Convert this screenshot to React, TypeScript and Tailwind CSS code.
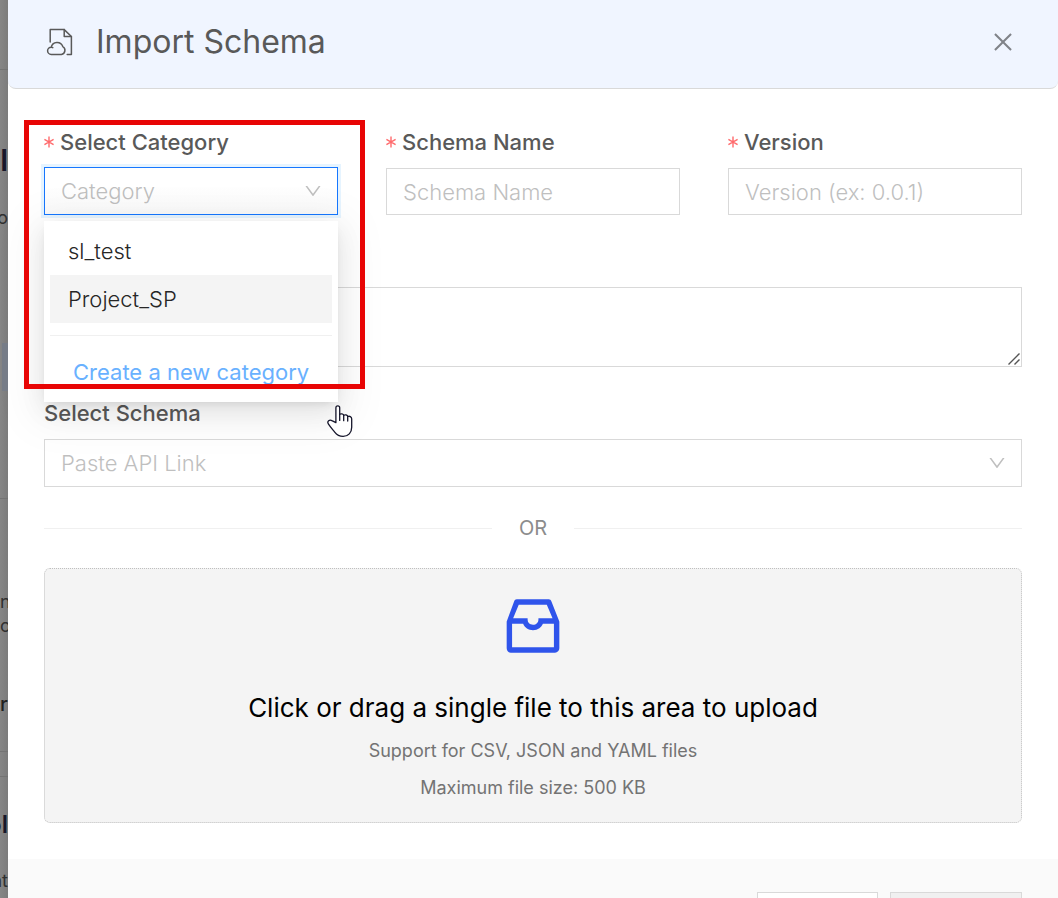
import React from "react";
import { AiOutlineClose, AiOutlineDown, AiOutlineInbox } from "react-icons/ai";

const fieldBox = "block w-full rounded-none border border-[#d9d9d9] bg-white px-4 text-[22px] font-light text-[#262626] placeholder:text-[#bfbfbf] outline-none";

function FieldLabel({ htmlFor, required, children }: { htmlFor: string; required?: boolean; children: React.ReactNode }) {
  return (
    <label htmlFor={htmlFor} className="flex h-9 items-center gap-1.5 text-[22px] font-medium whitespace-nowrap text-[#595959]">
      {required && <RequiredMark />}
      {children}
    </label>
  );
}

function RequiredMark() {
  return (
    <svg viewBox="0 0 10 12" className="h-3 w-2.5 text-[#ff6b6d]" fill="none" stroke="currentColor" strokeWidth="1.4" aria-hidden="true">
      <path d="M5 .5v11M.4 3.4l9.2 5.2M9.6 3.4.4 8.6" />
    </svg>
  );
}

function FileCloudIcon() {
  return (
    <svg viewBox="0 0 28 30" className="h-[30px] w-7" fill="none" stroke="#595959" strokeWidth="1.5" strokeLinecap="round" strokeLinejoin="round" aria-hidden="true">
      <path d="M4.2 15V2.6h14l7.2 6.9v17.9h-4.2" />
      <path d="M18.2 2.6v6.9h7.2" />
      <path d="M5.2 27.4a3.6 3.6 0 0 1 0-7.2c.6 0 1.1.1 1.6.4M5.2 20.2a6 6 0 0 1 11.6-.6 4.2 4.2 0 0 1-1.4 7.8H5.2" />
    </svg>
  );
}

function PointerHand() {
  return (
    <svg viewBox="0 0 26 34" className="pointer-events-none absolute top-[405px] left-[319px] z-30 h-[34px] w-[26px]" fill="#fff" stroke="#15152a" strokeWidth="1.3" strokeLinejoin="round" strokeLinecap="round" aria-hidden="true">
      <path d="M8.9 17.6V2.8c0-2.6 3.8-2.6 3.8 0v6.6c1-1 3.7-.6 4 .9 1.3-.9 3.7-.4 4 1.2 1.8-.7 4 .1 4 2.4v8.3c0 5.4-3.5 9.2-8.6 9.2-3.6 0-6-1.1-8.4-4.3C5.7 24.6 3.5 22.3 1.5 19.2c-2-3.2 1.2-5 3.4-3.6Z" />
      <path d="M12.7 9.4v6M16.7 10.3v5.4M20.7 11.5v4.6" />
    </svg>
  );
}

function Backdrop() {
  return (
    <div className="flex w-2 shrink-0 flex-col overflow-hidden bg-linear-to-r from-[#868686] to-[#7c7c7c] text-[#303030]" aria-hidden="true">
      <div className="h-[70px] shrink-0 border-b border-[#747474]" />
      <div className="flex h-44 shrink-0 flex-col items-end pt-[72px]">
        <span className="text-3xl leading-9 font-semibold text-[#17172a]">al</span>
        <span className="mt-7 text-lg leading-6">vo</span>
      </div>
      <div className="mt-[97px] ml-0.5 h-12 shrink-0 bg-[#777d88]" />
      <div className="h-[108px] shrink-0 border-b border-[#747474]" />
      <div className="flex h-[253px] shrink-0 flex-col border-b border-[#747474] pt-[91px]">
        <span className="text-lg leading-6">n</span>
        <span className="text-lg leading-6">o</span>
        <span className="mt-[54px] text-xl leading-6 font-medium text-[#202020]">r</span>
      </div>
      <div className="h-[25px] shrink-0 border-b border-[#747474]" />
      <div className="flex flex-col items-end pt-8">
        <span className="text-2xl leading-8 font-semibold text-[#17172a]">ol</span>
        <span className="mt-7 text-lg leading-6">nt</span>
      </div>
    </div>
  );
}

function CategoryMenu() {
  return (
    <div className="absolute top-full left-0 z-10 mt-1.5 w-full bg-white px-1.5 py-1.5 shadow-[0_9px_42px_12px_rgba(0,0,0,0.05),0_9px_24px_rgba(0,0,0,0.08),0_4px_9px_-4px_rgba(0,0,0,0.12)]">
      <div role="listbox" aria-label="Categories" className="text-[22px] font-light text-[#262626]">
        <div role="option" aria-selected="false" className="flex h-12 items-center px-[18px]">sl_test</div>
        <div role="option" aria-selected="true" className="flex h-12 items-center bg-[#f4f4f4] px-[18px]">Project_SP</div>
      </div>
      <hr className="mt-3 border-[#f0f0f0]" />
      <button type="button" className="mt-3 flex h-12 w-full items-center px-[23px] text-[22px] whitespace-nowrap text-[#69b1ff]">Create a new category</button>
    </div>
  );
}

export default function App() {
  return (
    <div className="flex h-screen overflow-hidden bg-white font-[Inter,'Noto_Sans',sans-serif]">
      <Backdrop />
      <main role="dialog" aria-labelledby="dialog-title" className="relative flex min-w-0 flex-1 flex-col">
        <header className="flex h-[89px] shrink-0 items-center rounded-b-lg border-b border-[#d9d9d9] bg-[#f0f5ff] pr-[42px] pb-1 pl-[38px]">
          <FileCloudIcon />
          <h1 id="dialog-title" className="ml-[22px] flex-1 text-[32px] leading-10 text-[#595959]">Import Schema</h1>
          <button type="button" aria-label="Close" className="text-[26px] text-[#808389]"><AiOutlineClose /></button>
        </header>

        <form className="flex shrink-0 flex-col px-9 pt-[35px] pb-9">
          <div className="grid grid-cols-3 gap-12">
            <div>
              <FieldLabel htmlFor="category" required>Select Category</FieldLabel>
              <div className="relative mt-[7px]">
                <select id="category" defaultValue="" className="block h-12 w-full appearance-none rounded-none border border-[#1677ff] bg-white bg-linear-to-b from-white from-40% to-[#f9f9f9] px-4 text-[22px] font-light text-[#bfbfbf] shadow-[0_0_0_3px_#e6f4ff] outline-none">
                  <option value="" disabled>Category</option>
                  <option>sl_test</option>
                  <option>Project_SP</option>
                </select>
                <AiOutlineDown className="pointer-events-none absolute top-3.5 right-[15px] text-xl text-[#bfbfbf]" aria-hidden="true" />
                <CategoryMenu />
              </div>
            </div>
            <div>
              <FieldLabel htmlFor="name" required>Schema Name</FieldLabel>
              <input id="name" type="text" placeholder="Schema Name" className={`${fieldBox} mt-2 h-[47px]`} />
            </div>
            <div>
              <FieldLabel htmlFor="version" required>Version</FieldLabel>
              <input id="version" type="text" placeholder="Version (ex: 0.0.1)" className={`${fieldBox} mt-2 h-[47px]`} />
            </div>
          </div>

          <div className="relative mt-[72px]">
            <textarea aria-label="Description" className={`${fieldBox} h-20 resize-none`} />
            <svg viewBox="0 0 12 12" className="pointer-events-none absolute right-0.5 bottom-0.5 size-3" stroke="#555" strokeWidth="1.4" aria-hidden="true">
              <path d="M.5 11.5l11-11M6.5 11.5l5-5" />
            </svg>
          </div>

          <div className="mt-7">
            <FieldLabel htmlFor="source">Select Schema</FieldLabel>
            <div className="relative mt-2">
              <select id="source" defaultValue="" className={`${fieldBox} h-12 appearance-none text-[#bfbfbf]`}>
                <option value="" disabled>Paste API Link</option>
              </select>
              <AiOutlineDown className="pointer-events-none absolute top-3.5 right-[15px] text-xl text-[#bfbfbf]" aria-hidden="true" />
            </div>
          </div>

          <div className="mt-[25px] flex h-8 items-center gap-[27px] text-xl text-[#8c8c8c]">
            <span className="h-px flex-1 bg-[#f0f0f0]" />
            OR
            <span className="h-px flex-1 bg-[#f0f0f0]" />
          </div>

          <button type="button" className="mt-6 flex h-[255px] flex-col items-center rounded-md border border-dotted border-[#bfbfbf] bg-[#f4f4f4] pt-[21px]">
            <AiOutlineInbox className="text-7xl text-[#2f54eb]" aria-hidden="true" />
            <span className="mt-7 text-[26px] leading-9 text-black">Click or drag a single file to this area to upload</span>
            <span className="mt-1.5 text-lg leading-[37px] text-[#737373]">Support for CSV, JSON and YAML files</span>
            <span className="text-lg leading-[37px] text-[#737373]">Maximum file size: 500 KB</span>
          </button>
        </form>

        <footer className="flex flex-1 shrink-0 justify-end gap-3 bg-[#fafafa] px-9 pt-[33px]">
          <button type="button" aria-label="Cancel" className="h-12 w-[121px] shrink-0 border border-[#d9d9d9] bg-white" />
          <button type="submit" aria-label="Import" disabled className="h-12 w-[132px] shrink-0 border border-[#d9d9d9] bg-[#f0f0f0]" />
        </footer>

        <div className="pointer-events-none absolute top-[120px] left-4 z-20 h-[269px] w-[341px] border-5 border-[#e80505]" aria-hidden="true" />
        <PointerHand />
      </main>
    </div>
  );
}
